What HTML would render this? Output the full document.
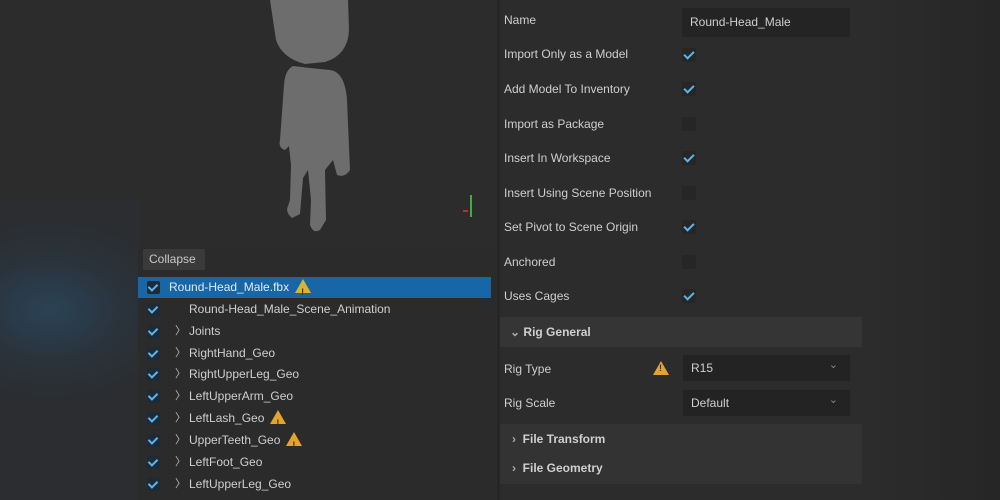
<!DOCTYPE html><html><head><style>
body{margin:0;width:1000px;height:500px;overflow:hidden;background:#2c2c2c;font-family:"Liberation Sans",sans-serif;color:#cfcfcf;font-size:12px;position:relative}
.a{position:absolute}
.blur{left:0;top:200px;width:140px;height:300px;background:radial-gradient(ellipse 130px 90px at 50px 110px,#2a4356 0%,#2a333c 55%,#2b2d30 100%)}
.tree{left:138px;top:247px;width:358px;height:253px;background:#2b2b2b}
.row{position:absolute;left:0;height:22px;width:353px;line-height:22px}
.cb{position:absolute;left:9px;top:5px;width:13px;height:13px;background:#1c2b38;border-radius:2px}
.cb:after{content:"";position:absolute;left:3px;top:1px;width:4px;height:7px;border:solid #5fb3e8;border-width:0 2px 2px 0;transform:rotate(45deg)}
.chev{position:absolute;left:37px;color:#bbb;font-size:11px}
.warn{display:inline-block;width:0;height:0;border-left:8px solid transparent;border-right:8px solid transparent;border-bottom:14px solid #e2a52a;vertical-align:-2px;margin-left:6px;position:relative}
.warn:after{content:"!";position:absolute;left:-2px;top:2px;font-size:9px;color:#333;font-weight:bold}
.lbl{position:absolute;left:504px;font-size:12px;color:#cfcfcf}
.rc{position:absolute;left:682px;width:14px;height:14px;background:#262626;border-radius:2px}
.rc.c:after{content:"";position:absolute;left:4px;top:1px;width:4px;height:8px;border:solid #5fb3e8;border-width:0 2px 2px 0;transform:rotate(45deg)}
.dd{position:absolute;left:683px;width:167px;height:26px;background:#232323;line-height:26px;padding-left:8px;box-sizing:border-box}
.dd:after{content:"⌄";position:absolute;right:12px;top:-3px;color:#888;font-size:11px}
.hd{position:absolute;left:500px;width:362px;font-weight:bold;font-size:12px}
</style></head><body>
<div class="a" style="left:497px;top:0;width:3px;height:500px;background:#262626"></div>
<div class="a blur"></div>
<svg class="a" style="left:250px;top:0" width="130" height="240" viewBox="250 0 130 240">
<g fill="#6d6d6d">
<path d="M270 0 L348 0 L349 30 Q348 55 325 62 L305 64 Q282 58 276 40 Z"/>
<path d="M293 66 Q285 70 284 85 L280 140 Q278 148 285 150 L289 146 L291 165 L290 200 L288 206 Q285 212 292 218 L300 214 L303 178 L308 170 L311 200 L310 225 Q313 234 320 230 L326 220 L325 170 L333 160 L337 175 Q345 178 350 170 L347 100 Q345 72 330 70 L310 68 Z"/>
</g>
</svg>
<div class="a" style="left:470px;top:195px;width:2px;height:22px;background:#3fae3f"></div>
<div class="a" style="left:463px;top:210px;width:5px;height:2px;background:#a33"></div>
<div class="a tree"></div>
<div class="a" style="left:143px;top:249px;width:62px;height:21px;background:#3a3a3a;line-height:21px;padding-left:6px;box-sizing:border-box;color:#c8c8c8">Collapse</div>
<div class="a" style="left:138px;top:277px;width:353px;height:21px;background:#1767a8"></div>
<div class="a" style="left:138px;top:276px">
<div class="row" style="top:0;color:#dfe9f3"><span class="cb"></span><span style="position:absolute;left:31px">Round-Head_Male.fbx<span class="warn" style="border-bottom-color:#d8b530"></span></span></div>
<div class="row" style="top:22px"><span class="cb"></span><span style="position:absolute;left:51px">Round-Head_Male_Scene_Animation</span></div>
<div class="row" style="top:44px"><span class="cb"></span><span class="chev">〉</span><span style="position:absolute;left:51px">Joints</span></div>
<div class="row" style="top:66px"><span class="cb"></span><span class="chev">〉</span><span style="position:absolute;left:51px">RightHand_Geo</span></div>
<div class="row" style="top:87px"><span class="cb"></span><span class="chev">〉</span><span style="position:absolute;left:51px">RightUpperLeg_Geo</span></div>
<div class="row" style="top:109px"><span class="cb"></span><span class="chev">〉</span><span style="position:absolute;left:51px">LeftUpperArm_Geo</span></div>
<div class="row" style="top:131px"><span class="cb"></span><span class="chev">〉</span><span style="position:absolute;left:51px">LeftLash_Geo<span class="warn"></span></span></div>
<div class="row" style="top:153px"><span class="cb"></span><span class="chev">〉</span><span style="position:absolute;left:51px">UpperTeeth_Geo<span class="warn"></span></span></div>
<div class="row" style="top:175px"><span class="cb"></span><span class="chev">〉</span><span style="position:absolute;left:51px">LeftFoot_Geo</span></div>
<div class="row" style="top:197px"><span class="cb"></span><span class="chev">〉</span><span style="position:absolute;left:51px">LeftUpperLeg_Geo</span></div>
</div>
<div class="a" style="left:865px;top:0;width:135px;height:500px;background:linear-gradient(90deg,#2c2c2c,#262626)"></div>
<div class="lbl" style="top:13px">Name</div>
<div class="a" style="left:682px;top:8px;width:168px;height:29px;background:#242424;line-height:29px;padding-left:8px;box-sizing:border-box">Round-Head_Male</div>
<div class="lbl" style="top:47px">Import Only as a Model</div><div class="rc c" style="top:48px"></div>
<div class="lbl" style="top:82px">Add Model To Inventory</div><div class="rc c" style="top:82px"></div>
<div class="lbl" style="top:117px">Import as Package</div><div class="rc" style="top:117px"></div>
<div class="lbl" style="top:151px">Insert In Workspace</div><div class="rc c" style="top:151px"></div>
<div class="lbl" style="top:186px">Insert Using Scene Position</div><div class="rc" style="top:186px"></div>
<div class="lbl" style="top:220px">Set Pivot to Scene Origin</div><div class="rc c" style="top:220px"></div>
<div class="lbl" style="top:255px">Anchored</div><div class="rc" style="top:255px"></div>
<div class="lbl" style="top:289px">Uses Cages</div><div class="rc c" style="top:289px"></div>
<div class="hd" style="top:317px;height:30px;background:#353535;line-height:30px"><span style="padding-left:10px;color:#aaa">⌄</span> Rig General</div>
<div class="lbl" style="top:362px">Rig Type</div>
<span class="warn a" style="left:653px;top:361px;margin:0"></span>
<div class="dd" style="top:355px">R15</div>
<div class="lbl" style="top:396px">Rig Scale</div>
<div class="dd" style="top:390px">Default</div>
<div class="hd" style="top:424px;height:60px;background:#333"><div style="position:absolute;top:8px;left:12px"><span style="color:#aaa">›</span>&nbsp; File Transform</div><div style="position:absolute;top:37px;left:12px"><span style="color:#aaa">›</span>&nbsp; File Geometry</div></div>
</body></html>
